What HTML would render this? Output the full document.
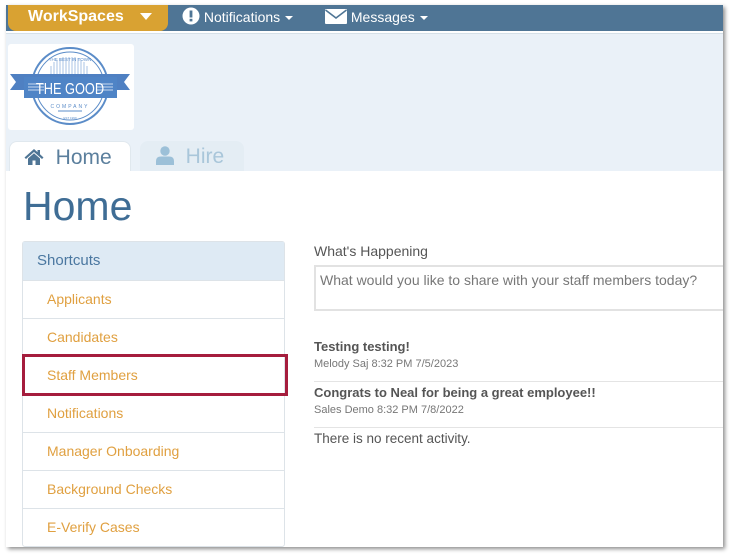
<!DOCTYPE html>
<html><head><meta charset="utf-8"><style>
*{box-sizing:border-box;margin:0;padding:0}
body{width:732px;height:555px;background:#fff;font-family:"Liberation Sans",sans-serif;position:relative;overflow:hidden}
.frame{position:absolute;left:6px;top:5px;width:717px;height:542px;background:#fff;box-shadow:2px 2px 4px rgba(0,0,0,.45);overflow:hidden}
.bar{position:absolute;left:0;top:0;width:717px;height:26px;background:#4f7595}
.ws{position:absolute;left:2px;top:0;width:160px;height:26px;background:#d9a232;border-radius:0 0 8px 8px;color:#fff;font-weight:bold;font-size:16px;line-height:24px;padding-left:20px}
.nav{position:absolute;top:0;color:#fff;font-size:14px;line-height:24px}
.caret{display:inline-block;width:0;height:0;border-left:4px solid transparent;border-right:4px solid transparent;border-top:4px solid #fff;vertical-align:middle;margin-left:5px}
.hdr{position:absolute;left:0;top:28px;width:717px;height:138px;background:#eaf1f8;border-top:1px solid #d5e0e8}
.logo{position:absolute;left:2px;top:39px;width:126px;height:86px;background:#fff;border-radius:3px}
.tab{position:absolute;top:136px;height:31px;border-radius:8px 8px 0 0;font-size:21px;line-height:32px}
.main{position:absolute;left:1px;top:166px;width:716px;height:376px;background:#fff}
h1{position:absolute;left:16px;top:12px;font-weight:normal;font-size:41px;color:#3f6d95}
.sc{position:absolute;left:15px;top:70px;width:263px;border:1px solid #dde3e8;border-radius:3px}
.sc div{height:38px;border-top:1px solid #dde3e8;color:#e0a040;font-size:14px;line-height:37px;padding-left:24px}
.sc .h{background:#deeaf4;border-top:none;color:#4a77a0;font-size:15px;padding-left:14px}
.red{position:absolute;left:15px;top:183px;width:266px;height:42px;border:3px solid #a51d3d}
.g{position:absolute;left:307px;color:#555;font-size:14px}
.ta{position:absolute;left:307px;top:94px;width:420px;height:46px;border:2px solid #e2e2e2;color:#777;font-size:14px;padding:5px 4px}
.hr{position:absolute;left:307px;width:420px;border-top:1px solid #e4e4e4}
</style></head><body>
<div class="frame">
<div class="bar">
 <div class="ws">WorkSpaces <span class="caret" style="border-left-width:6px;border-right-width:6px;border-top-width:7px;margin-left:12px"></span></div>
 <div class="nav" style="left:176px"><svg width="18" height="18" viewBox="0 0 18 18" style="vertical-align:-3px"><circle cx="9" cy="9" r="8.5" fill="#fff"/><rect x="7.6" y="3.5" width="2.8" height="7" fill="#4f7595"/><rect x="7.6" y="11.8" width="2.8" height="2.6" fill="#4f7595"/></svg> Notifications<span class="caret"></span></div>
 <div class="nav" style="left:319px"><svg width="22" height="15" viewBox="0 0 22 15" style="vertical-align:-2px"><rect width="22" height="15" rx="1" fill="#fff"/><path d="M0.5 1 L11 9 L21.5 1" stroke="#4f7595" stroke-width="1.6" fill="none"/></svg> Messages<span class="caret"></span></div>
</div>
<div class="hdr"></div>
<div class="logo"><svg width="126" height="86" viewBox="0 0 126 86">
 <circle cx="62" cy="42" r="38" fill="none" stroke="#5b8cc8" stroke-width="2"/>
 <circle cx="62" cy="42" r="34" fill="none" stroke="#5b8cc8" stroke-width="1"/>
 <g stroke="#a9c3e6" stroke-width="1">
 <path d="M43 38V22M46 38V18M49 38V16M52 38V14M55 38V13M58 38V13M61 38V13M64 38V13M67 38V13M70 38V14M73 38V16M76 38V18M79 38V22"/></g>
 <path d="M2 30H122L116 38L122 46H2L8 38Z" fill="#4f80c2"/>
 <rect x="16" y="33" width="93" height="21" fill="#4f84c6"/>
 <g stroke="#c8daf0" stroke-width="1"><path d="M20 40H36M20 43H36M20 46H36M89 40H105M89 43H105M89 46H105"/></g>
 <text x="62" y="50" text-anchor="middle" fill="#fff" font-size="16" transform="translate(62 0) scale(0.8 1) translate(-62 0)" font-family="Liberation Sans Narrow,Liberation Sans,sans-serif">THE GOOD</text>
 <text x="62" y="64" text-anchor="middle" fill="#5b8cc8" font-size="5" letter-spacing="2">COMPANY</text>
 <path d="M50 67H74" stroke="#5b8cc8" stroke-width="1"/>
 <text x="62" y="17" text-anchor="middle" fill="#5b8cc8" font-size="4.5">THE BEST IN TOWN</text>
 <text x="62" y="75" text-anchor="middle" fill="#5b8cc8" font-size="3">EST 1999</text>
</svg></div>
<div class="tab" style="left:3px;width:122px;background:#fff;border:1px solid #e0e8ee;border-bottom:none;color:#5b7f9d;padding-left:14px">
 <svg width="20" height="18" viewBox="0 0 20 18" style="vertical-align:-2px"><path d="M10 1L0.5 9.5L2 11L10 4L18 11L19.5 9.5L16 6.3V2H13.5V4.1Z M4 10.5V17H8.5V12.5H11.5V17H16V10.5L10 5.3Z" fill="#4f7595"/></svg>&nbsp; Home</div>
<div class="tab" style="left:134px;width:104px;background:#e4edf4;color:#a9c6da;padding-left:16px">
 <svg width="18" height="19" viewBox="0 0 18 19" style="vertical-align:-2px"><circle cx="9" cy="5" r="4.7" fill="#9cc0d8"/><path d="M0 19V15Q0 10.5 5 10.5H13Q18 10.5 18 15V19Z" fill="#9cc0d8"/></svg>&nbsp; Hire</div>
<div class="main">
 <h1>Home</h1>
 <div class="sc">
  <div class="h">Shortcuts</div>
  <div>Applicants</div><div>Candidates</div><div>Staff Members</div><div>Notifications</div><div>Manager Onboarding</div><div>Background Checks</div><div>E-Verify Cases</div>
 </div>
 <div class="red"></div>
 <div class="g" style="top:72px">What's Happening</div>
 <div class="ta">What would you like to share with your staff members today?</div>
 <div class="g" style="top:168px;font-weight:bold;font-size:13px">Testing testing!</div>
 <div class="g" style="top:187px;font-size:11px;color:#777">Melody Saj 8:32 PM 7/5/2023</div>
 <div class="hr" style="top:210px"></div>
 <div class="g" style="top:214px;font-weight:bold;font-size:13px">Congrats to Neal for being a great employee!!</div>
 <div class="g" style="top:233px;font-size:11px;color:#777">Sales Demo 8:32 PM 7/8/2022</div>
 <div class="hr" style="top:256px"></div>
 <div class="g" style="top:260px;font-size:13.5px">There is no recent activity.</div>
</div>
</div>
</body></html>
